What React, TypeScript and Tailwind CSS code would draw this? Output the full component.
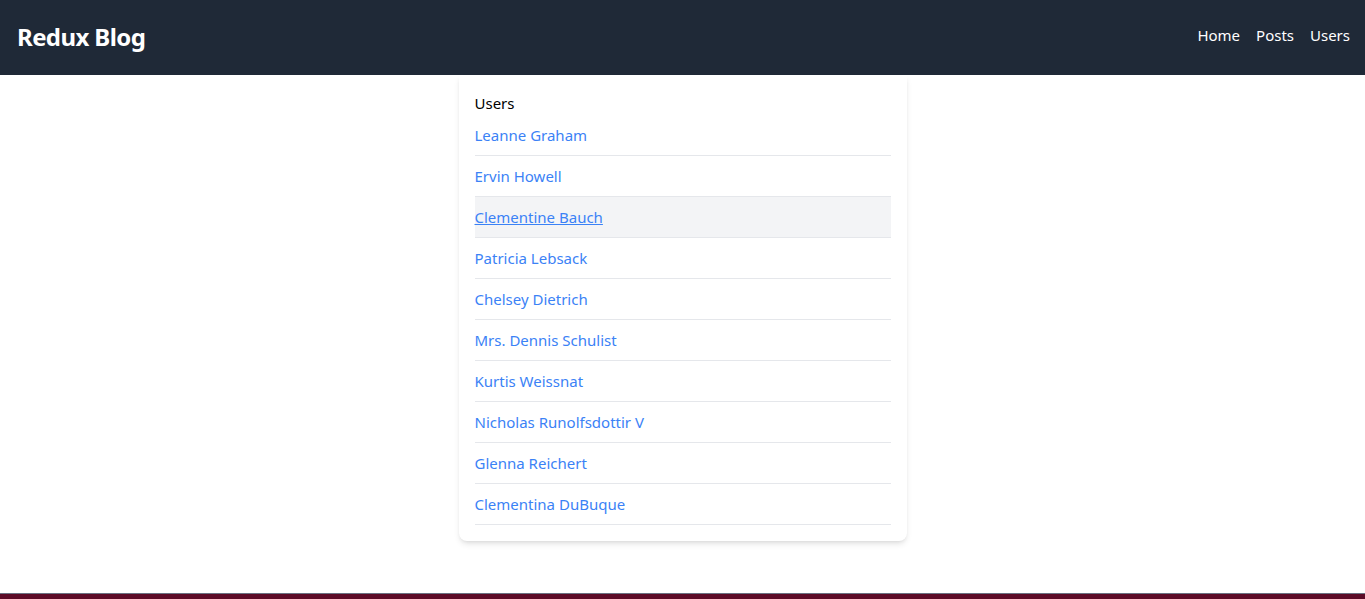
import React, { useState } from "react";

const users = [
  "Leanne Graham",
  "Ervin Howell",
  "Clementine Bauch",
  "Patricia Lebsack",
  "Chelsey Dietrich",
  "Mrs. Dennis Schulist",
  "Kurtis Weissnat",
  "Nicholas Runolfsdottir V",
  "Glenna Reichert",
  "Clementina DuBuque",
];

export default function App() {
  const [hovered, setHovered] = useState<number | null>(2);

  return (
    <div className="min-h-screen bg-white font-['Noto_Sans',sans-serif] text-black">
      {/* top bar */}
      <header className="h-[75px] bg-[#1f2937] flex items-center justify-between pl-[17px] pr-[15px]">
        <h1 className="text-white text-[24px] font-bold tracking-tight mb-0.5">Redux Blog</h1>
        <nav className="flex items-center gap-4 text-white text-[15px] mb-1">
          <a href="#">Home</a>
          <a href="#">Posts</a>
          <a href="#">Users</a>
        </nav>
      </header>

      <main className="flex justify-center">
        <section className="w-[448px] bg-white rounded-b-lg shadow-md p-4">
          <h2 className="text-[15px] leading-6">Users</h2>
          <ul>
            {users.map((name, i) => (
              <li
                key={name}
                onMouseEnter={() => setHovered(i)}
                onMouseLeave={() => setHovered(null)}
                className={
                  "border-b border-gray-200 py-2 leading-6 " +
                  (hovered === i ? "bg-gray-100" : "")
                }
              >
                <a
                  href="#"
                  className={
                    "text-[15px] text-[#3b82f6] " + (hovered === i ? "underline" : "")
                  }
                >
                  {name}
                </a>
              </li>
            ))}
          </ul>
        </section>
      </main>

      {/* footer strip */}
      <footer className="mt-[52px] h-16 bg-[#5c0b27] border-t border-gray-500"></footer>
    </div>
  );
}
